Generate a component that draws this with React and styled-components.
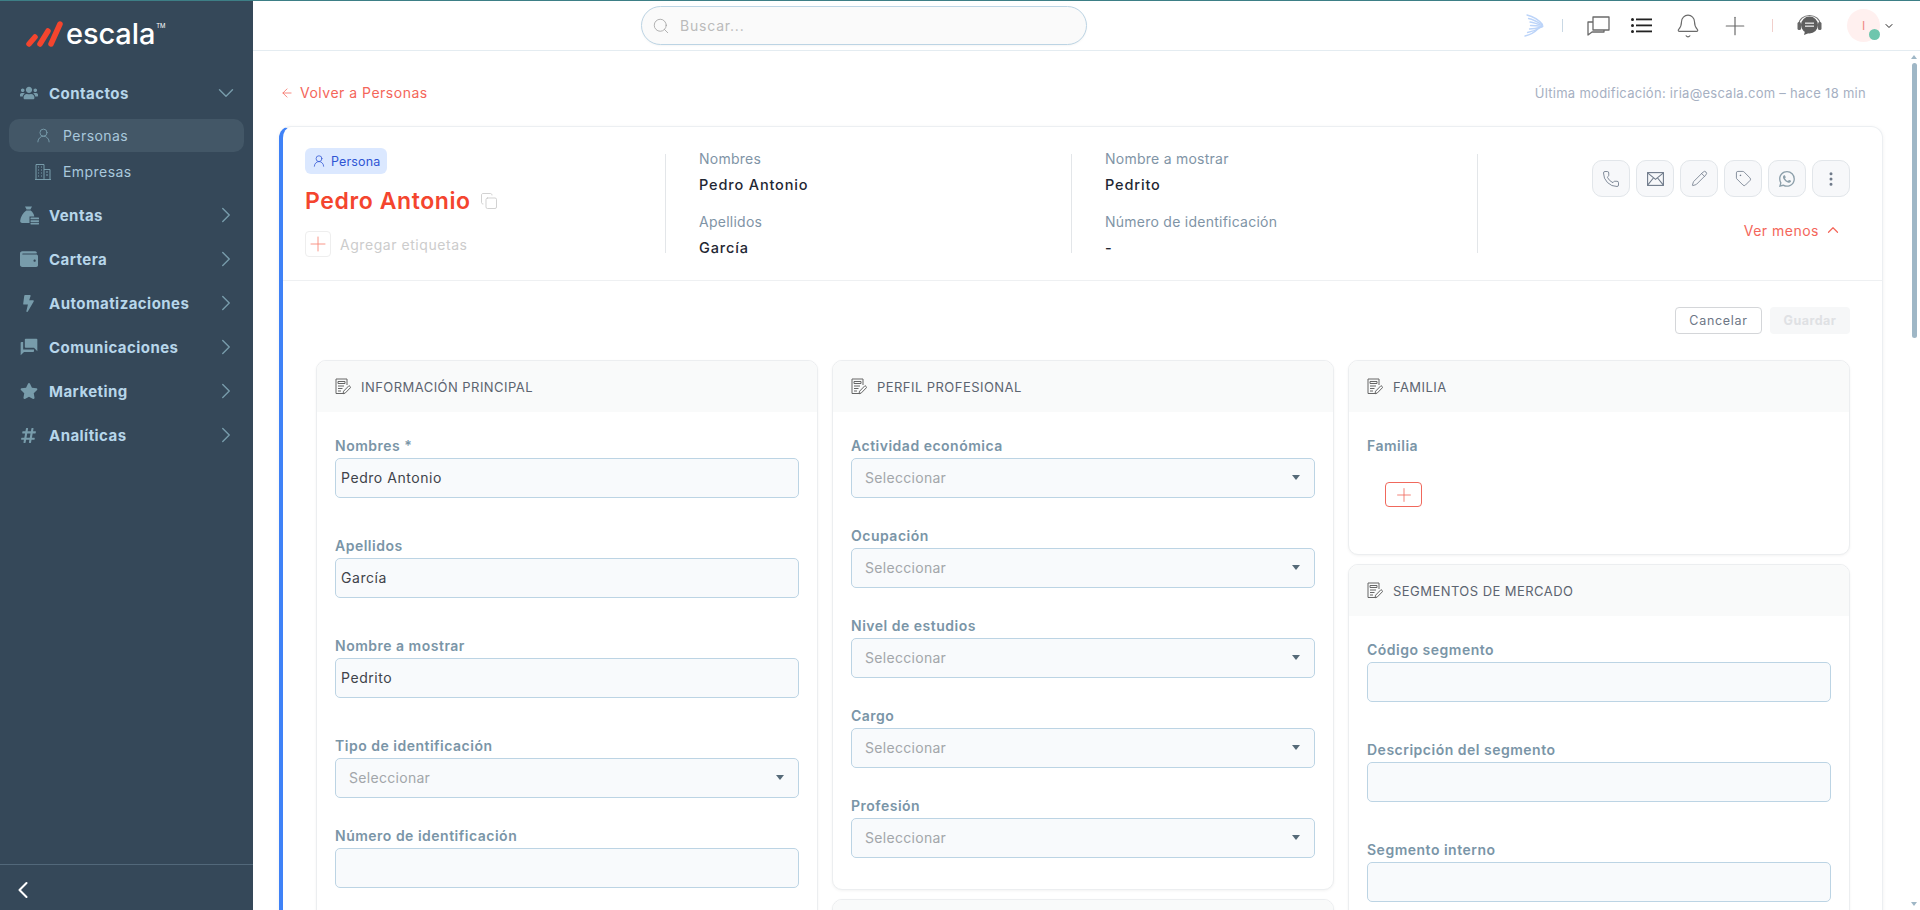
import React from 'react';
import styled, { createGlobalStyle } from 'styled-components';
import { Phone, Pencil, Tag, EllipsisVertical, ChevronDown, ChevronRight, ChevronLeft, ChevronUp, Search, Bell, Plus, ArrowLeft, UserRound, Copy } from 'lucide-react';
import { FaUsers, FaWallet, FaBolt, FaStar, FaHashtag } from 'react-icons/fa';
import { MdForum } from 'react-icons/md';
import { BsWhatsapp } from 'react-icons/bs';

const FONT = `Inter, "Noto Sans", "Liberation Sans", sans-serif`;

const Global = createGlobalStyle`
  html, body { margin: 0; padding: 0; height: 100%; overflow: hidden; background: #fff; }
  body { font-family: ${FONT}; }
  * { box-sizing: border-box; }
`;

const Shell = styled.div`display: flex; height: 910px; border-top: 1px solid #3d7f86;`;

const Sidebar = styled.aside`
  width: 253px; flex: none; background: #354859; display: flex; flex-direction: column;
`;
const LogoRow = styled.div`
  height: 64px; display: flex; align-items: flex-start; gap: 3px; padding: 15px 0 0 26px; flex: none;
`;
const LogoText = styled.span`
  color: #fff; font-size: 29px; font-weight: 500; line-height: 36px; letter-spacing: -0.1px;
  sup { font-size: 6px; vertical-align: top; line-height: 20px; margin-left: 1px; font-weight: 400; }
`;
const Nav = styled.nav`flex: 1; display: flex; flex-direction: column; padding-top: 6px;`;
const NavItem = styled.div`
  height: 44px; display: flex; align-items: center; padding: 0 14px 0 20px; flex: none;
  color: #b7d6ea; font-size: 15px; font-weight: 700; letter-spacing: 0.45px;
`;
const NavIcon = styled.span`
  width: 29px; flex: none; display: flex; align-items: center; color: #789cab;
`;
const NavLabel = styled.span`flex: 1;`;
const NavChevron = styled.span`display: flex; color: #789cab;`;
const SubItem = styled.div`
  height: ${p => p.$active ? '33px' : '37px'};
  margin: ${p => p.$active ? '4px 9px 1px' : '0 9px 3px'};
  display: flex; align-items: center; padding-left: 26px; border-radius: 10px; flex: none;
  background: ${p => p.$active ? '#435767' : 'transparent'};
  color: #a9c8dc; font-size: 14px; font-weight: 400; letter-spacing: 0.45px;
`;
const SubIcon = styled.span`width: 28px; flex: none; display: flex; color: #789cab;`;
const SideFoot = styled.div`
  height: 46px; flex: none; border-top: 1px solid #52687a; display: flex; align-items: center; padding: 5px 0 0 9px; color: #fff;
`;

const Right = styled.div`flex: 1; min-width: 0; display: flex; flex-direction: column; position: relative;`;
const Topbar = styled.header`
  height: 50px; flex: none; border-bottom: 1px solid #e4ecf1; display: flex; align-items: center; background: #fff;
`;
const SearchBox = styled.div`
  width: 446px; height: 39px; margin-left: 388px; border: 1px solid #bcd4e4; border-radius: 20px; background: #fafafa;
  display: flex; align-items: center; padding-left: 10px; gap: 10px; color: #bbb; font-size: 14px; letter-spacing: 0.8px;
  box-shadow: 0 1px 2px rgba(0,0,0,.04);
`;
const TopTools = styled.div`
  display: flex; align-items: center; margin-left: auto; height: 100%;
`;
const ToolSep = styled.span`width: 1px; height: 13px; background: ${p => p.$c}; flex: none; margin-right: ${p => p.$mr}px;`;
const ToolIcon = styled.span`display: flex; color: ${p => p.$c || '#6a6a6a'}; margin-right: ${p => p.$mr || 0}px; flex: none;`;
const Avatar = styled.div`
  width: 33px; height: 33px; border-radius: 50%; background: #fff0ef; position: relative; display: flex; align-items: center; justify-content: center;
  color: #f08585; font-size: 12px; flex: none;
`;
const AvatarDot = styled.span`
  position: absolute; width: 11px; height: 11px; border-radius: 50%; background: #6ec6ad; right: 0; bottom: 2px;
`;
const AvatarCaret = styled.span`display: flex; margin: 0 25px 0 3px; color: #222;`;

const Scroller = styled.main`
  flex: 1; min-height: 0; overflow-y: scroll; scrollbar-width: none; padding: 0 37px 30px 26px;
  &::-webkit-scrollbar { display: none; }
`;
const Rail = styled.div`
  position: absolute; top: 51px; bottom: 0; right: 0; width: 9px; background: #fff; display: flex; flex-direction: column; align-items: center; padding: 3px 0 4px 0;
`;
const RailArrow = styled.span`
  width: 0; height: 0; flex: none; margin-right: 3px; border-left: 3px solid transparent; border-right: 3px solid transparent;
  ${p => p.$down ? 'border-top: 4px solid #9fb7c6; margin-top: auto;' : 'border-bottom: 4px solid #9fb7c6;'}
`;
const RailThumb = styled.span`
  width: 5px; height: 275px; flex: none; margin: 4px 3px 0 0; border-radius: 3px; background: #9fb7c6;
`;
const TopLine = styled.div`
  height: 75px; display: flex; align-items: center; justify-content: space-between; padding: 8px 17px 0 1px;
`;
const BackLink = styled.a`
  display: flex; align-items: center; gap: 6px; color: #f4665a; font-size: 14px; letter-spacing: 0.5px;
`;
const Modified = styled.span`color: #a6b0c2; font-size: 13px; letter-spacing: 0.28px;`;

const MainCard = styled.section`
  background: #fff; border: 1px solid #eceff2; border-left: 4px solid #3f82f7; border-radius: 12px;
  box-shadow: 0 1px 4px rgba(0,0,0,.06); min-height: 2600px;
`;
const Summary = styled.div`
  height: 154px; border-bottom: 1px solid #eef0f2; display: grid; grid-template-columns: 361px 406px 406px 1fr; padding: 27px 32px 0 22px;
`;
const SumCol = styled.div`
  height: 99px; border-right: ${p => p.$last ? 'none' : '1px solid #e3e6e9'}; padding-left: ${p => p.$first ? 0 : 33}px;
  display: flex; flex-direction: column;
  & > * { flex: none; }
`;
const Badge = styled.span`
  align-self: flex-start; height: 26px; width: 82px; margin-top: -6px; background: #dbe8ff; border-radius: 6px; color: #2f55d4; font-size: 12.5px;
  display: flex; align-items: center; gap: 5px; padding-left: 7px; letter-spacing: 0.15px;
`;
const NameRow = styled.div`display: flex; align-items: center; gap: 9px; margin-top: 13px; height: 28px; color: #c8c8c8;`;
const Name = styled.h1`
  margin: 0; font-size: 23px; font-weight: 600; color: #f4452e; letter-spacing: 0.6px; line-height: 28px;
`;
const TagRow = styled.div`display: flex; align-items: center; gap: 9px; margin-top: 16px; color: #cccccc; font-size: 14px; letter-spacing: 0.55px;`;
const TagAdd = styled.span`
  width: 26px; height: 26px; border: 1px solid #eee; border-radius: 4px; display: flex; align-items: center; justify-content: center; color: #f88a7c;
`;
const SumLabel = styled.span`
  color: #7f94a6; font-size: 14px; letter-spacing: 0.25px; line-height: 20px; margin-top: ${p => p.$mt}px;
`;
const SumValue = styled.span`
  color: #1f2733; font-size: 14.5px; font-weight: 500; letter-spacing: 0.85px; line-height: 20px; margin-top: 6px;
`;
const Actions = styled.div`display: flex; flex-direction: column; align-items: flex-end;`;
const IconBtns = styled.div`display: flex; gap: 6px; margin-top: 6px;`;
const IconBtn = styled.button`
  width: 38px; height: 37px; border: 1px solid #e2e6ea; border-radius: 10px; background: #f7f8fa; color: #6f7a8a;
  display: flex; align-items: center; justify-content: center; padding: 0;
`;
const Less = styled.span`
  display: flex; align-items: center; gap: 5px; color: #f4665a; font-size: 14px; letter-spacing: 0.5px; margin-top: 24px; margin-right: 8px;
`;
const FormArea = styled.div`padding: 26px 32px 0 33px;`;
const FormActions = styled.div`display: flex; justify-content: flex-end; gap: 8px; margin-bottom: 26px;`;
const CancelBtn = styled.button`
  width: 87px; height: 27px; border: 1px solid #d4d6d9; border-radius: 4px; background: #fff; color: #6d7685; font: 400 12.5px ${FONT}; letter-spacing: 0.7px;
`;
const SaveBtn = styled.button`
  width: 80px; height: 27px; border: none; border-radius: 4px; background: #f6f7f8; color: #dfe1e4; font: 700 12.5px ${FONT}; letter-spacing: 0.5px;
`;
const Columns = styled.div`display: grid; grid-template-columns: repeat(3, 502px); column-gap: 14px; align-items: start;`;
const Stack = styled.div`display: flex; flex-direction: column; gap: 9px;`;
const Panel = styled.div`
  background: #fff; border: 1px solid #eceef0; border-radius: 10px; box-shadow: 0 1px 3px rgba(0,0,0,.05); overflow: hidden;
  height: ${p => p.$h ? p.$h + 'px' : 'auto'};
`;
const PanelHead = styled.div`
  height: 51px; background: #f9fafa; display: flex; align-items: center; gap: 10px; padding-left: 18px; color: #5c6470; font-size: 13px; font-weight: 400; letter-spacing: 0.45px;
`;
const PanelBody = styled.div`padding: 22px 18px 0;`;
const Field = styled.div`margin-bottom: ${p => p.$select ? 26 : 36}px;`;
const Label = styled.label`
  display: block; color: #7a95a7; font-size: 14px; font-weight: 600; line-height: 23px; height: 23px; letter-spacing: 0.5px;
`;
const InputBox = styled.div`
  height: 40px; border: 1px solid #bcd4e4; border-radius: 5px; background: #f8fafc; display: flex; align-items: center; margin-top: 1px;
  padding: 0 ${p => p.$select ? 14 : 6}px 1px ${p => p.$select ? 13 : 5}px; color: ${p => p.$select ? '#a2a6aa' : '#3f434a'}; font-size: 14px;
  letter-spacing: ${p => p.$select ? 0.3 : 0.55}px;
  justify-content: space-between;
`;
const Caret = styled.span`
  width: 0; height: 0; border-left: 4px solid transparent; border-right: 4px solid transparent; border-top: 5px solid #566a78;
`;
const AddBtn = styled.button`
  width: 37px; height: 25px; border: 1px solid #f0685c; border-radius: 4px; background: #fff; color: #f0685c; margin: 25px 0 0 18px; padding: 0;
  display: flex; align-items: center; justify-content: center;
`;

const LogoMark = () => (
  <svg width="37" height="26" viewBox="0 0 37 26" style={{ marginTop: 5, flex: 'none' }}>
    <g stroke="#f4452e" strokeWidth="5.5" strokeLinecap="round" fill="none">
      <path d="M3 23 L9 16" />
      <path d="M14 23 L22 10" />
      <path d="M25 23 L34 3" />
    </g>
  </svg>
);
const BagIcon = () => (
  <svg width="19" height="19" viewBox="0 0 19 19" fill="currentColor">
    <path d="M5 0.5h7l-1.600 3H6.600z" />
    <path d="M6.300 4.500h4.400c2 1.700 3.300 3.800 3.600 6H9.500v6.500H2.200C.6 17 0 16 .2 14.600.6 10.600 3 7 6.300 4.500z" />
    <rect x="10.500" y="11.600" width="8.500" height="1.700" rx=".4" />
    <rect x="10.500" y="14.200" width="8.500" height="1.700" rx=".4" />
    <rect x="10.500" y="16.800" width="8.500" height="1.700" rx=".4" />
  </svg>
);
const PersonThin = ({ size = 17 }) => <UserRound size={size} strokeWidth={1.3} />;
const BuildingIcon = () => (
  <svg width="16" height="17" viewBox="0 0 16 17" fill="none" stroke="currentColor" strokeWidth="1">
    <path d="M1 16.500V1.500h8v15M9 6.500h6v10M0 16.500h16" />
    <path d="M3 4h1M6 4h1M3 7h1M6 7h1M3 10h1M6 10h1M3 13h1M6 13h1M11 9h2M11 12h2" strokeWidth="1.200" />
  </svg>
);
const NoteIcon = () => (
  <svg width="16" height="17" viewBox="0 0 16 17" fill="none" stroke="#666" strokeWidth="1" style={{ flex: 'none' }}>
    <path d="M9.500 15.500H1V1h11v6" />
    <path d="M3 3.500h7v2H3zM3 8h6M3 10.500h4.500M3 13h3" />
    <path d="M8 15.800l.6-2.600 5.400-5.600 1.800 1.700-5.400 5.600z" />
  </svg>
);
const MailIcon = () => (
  <svg width="17" height="14" viewBox="0 0 17 14" fill="none" stroke="currentColor" strokeWidth="1.100">
    <rect x=".6" y=".6" width="15.800" height="12.800" />
    <path d="M.6.8l7.900 6.600L16.400.8M.6 13.200l5.800-7.200M16.400 13.200l-5.800-7.200" />
  </svg>
);
const WingIcon = () => (
  <svg width="20" height="24" viewBox="0 0 20 24" fill="none" stroke="#bcd4f9" strokeWidth="1.300" strokeLinecap="round" style={{ flex: 'none' }}>
    <path d="M3 1c5 1.200 11 4 15.500 9.500" />
    <path d="M4.500 4.500c4 .8 8 2.600 14 6.500" />
    <path d="M6 8c4 .6 8 2 13 4" />
    <path d="M6.500 11.500c4 0 8 .4 12 1" />
    <path d="M5.500 15c4-.2 8-1 12.500-2" />
    <path d="M3.500 18.500c4-.7 9-2.500 13-5" />
    <path d="M1 22c5-1 10-4 14-8" />
  </svg>
);
const ChatsIcon = () => (
  <svg width="23" height="20" viewBox="0 0 23 20" fill="none" stroke="#6a6a6a" strokeWidth="1.300" strokeLinejoin="round">
    <path d="M6 6H1v13l4-3h12v-2" />
    <path d="M6 1h16v13H6z" />
  </svg>
);
const ListIcon = () => (
  <svg width="21" height="15" viewBox="0 0 21 15" fill="#222">
    <circle cx="1.500" cy="1.500" r="1.500" /><circle cx="1.500" cy="7.500" r="1.500" /><circle cx="1.500" cy="13.500" r="1.500" />
    <rect x="5" y="0.500" width="16" height="1.800" /><rect x="5" y="6.500" width="16" height="1.800" /><rect x="5" y="12.500" width="16" height="1.800" />
  </svg>
);
const HeadsetIcon = () => (
  <svg width="25" height="23" viewBox="0 0 25 23">
    <path d="M2 13V10C2 5 7 1.500 12.500 1.500S23 5 23 10v3" fill="none" stroke="#777" strokeWidth="1.200" />
    <rect x="0.500" y="8" width="3.500" height="8" rx="1.500" fill="#666" />
    <rect x="21" y="8" width="3.500" height="8" rx="1.500" fill="#666" />
    <circle cx="12.500" cy="11" r="8.500" fill="#5e5e5e" />
    <path d="M8 17l-1 4 5-2z" fill="#5e5e5e" />
    <rect x="8" y="8.500" width="9" height="1.400" fill="#ddd" /><rect x="8" y="11.500" width="9" height="1.400" fill="#ddd" />
  </svg>
);

const menu = [
  ['Ventas', <BagIcon />],
  ['Cartera', <FaWallet size={18} />],
  ['Automatizaciones', <FaBolt size={17} />],
  ['Comunicaciones', <MdForum size={20} style={{ transform: 'scaleX(-1)', marginLeft: -1 }} />],
  ['Marketing', <FaStar size={18} />],
  ['Analíticas', <FaHashtag size={17} />],
];

const InputField = ({ label, value }) => (
  <Field><Label>{label}</Label><InputBox>{value}</InputBox></Field>
);
const SelectField = ({ label }) => (
  <Field $select><Label>{label}</Label><InputBox $select>Seleccionar<Caret /></InputBox></Field>
);
const Head = ({ children }) => <PanelHead><NoteIcon />{children}</PanelHead>;

export default function App() {
  return (
    <>
      <Global />
      <Shell>
        <Sidebar>
          <LogoRow><LogoMark /><LogoText>escala<sup>TM</sup></LogoText></LogoRow>
          <Nav>
            <NavItem>
              <NavIcon><FaUsers size={18} /></NavIcon><NavLabel>Contactos</NavLabel>
              <NavChevron><ChevronDown size={26} strokeWidth={1.3} /></NavChevron>
            </NavItem>
            <SubItem $active><SubIcon><PersonThin /></SubIcon>Personas</SubItem>
            <SubItem><SubIcon><BuildingIcon /></SubIcon>Empresas</SubItem>
            {menu.map(([l, i]) => (
              <NavItem key={l}>
                <NavIcon>{i}</NavIcon><NavLabel>{l}</NavLabel>
                <NavChevron><ChevronRight size={26} strokeWidth={1.3} /></NavChevron>
              </NavItem>
            ))}
          </Nav>
          <SideFoot><ChevronLeft size={28} strokeWidth={1.8} /></SideFoot>
        </Sidebar>
        <Right>
          <Topbar>
            <SearchBox><Search size={18} strokeWidth={1} color="#999" />Buscar...</SearchBox>
            <TopTools>
              <ToolIcon $mr={18}><WingIcon /></ToolIcon>
              <ToolSep $c="#c9d8e4" $mr={24} />
              <ToolIcon $mr={21}><ChatsIcon /></ToolIcon>
              <ToolIcon $mr={23}><ListIcon /></ToolIcon>
              <ToolIcon $mr={19}><Bell size={26} strokeWidth={1.05} /></ToolIcon>
              <ToolIcon $mr={22}><Plus size={30} strokeWidth={0.95} /></ToolIcon>
              <ToolSep $c="#f1cfcb" $mr={24} />
              <ToolIcon $mr={25}><HeadsetIcon /></ToolIcon>
              <Avatar>I<AvatarDot /></Avatar>
              <AvatarCaret><ChevronDown size={12} strokeWidth={2} /></AvatarCaret>
            </TopTools>
          </Topbar>
          <Scroller>
            <TopLine>
              <BackLink><ArrowLeft size={14} strokeWidth={1.3} />Volver a Personas</BackLink>
              <Modified>Última modificación: iria@escala.com – hace 18 min</Modified>
            </TopLine>
            <MainCard>
              <Summary>
                <SumCol $first>
                  <Badge><PersonThin size={14} />Persona</Badge>
                  <NameRow><Name>Pedro Antonio</Name><Copy size={18} strokeWidth={1.1} /></NameRow>
                  <TagRow><TagAdd><Plus size={24} strokeWidth={0.9} /></TagAdd>Agregar etiquetas</TagRow>
                </SumCol>
                <SumCol>
                  <SumLabel $mt={-5}>Nombres</SumLabel><SumValue>Pedro Antonio</SumValue>
                  <SumLabel $mt={17}>Apellidos</SumLabel><SumValue>García</SumValue>
                </SumCol>
                <SumCol>
                  <SumLabel $mt={-5}>Nombre a mostrar</SumLabel><SumValue>Pedrito</SumValue>
                  <SumLabel $mt={17}>Número de identificación</SumLabel><SumValue>-</SumValue>
                </SumCol>
                <SumCol $last>
                  <Actions>
                    <IconBtns>
                      <IconBtn><Phone size={18} strokeWidth={1.15} /></IconBtn>
                      <IconBtn><MailIcon /></IconBtn>
                      <IconBtn><Pencil size={17} strokeWidth={1.15} /></IconBtn>
                      <IconBtn><Tag size={17} strokeWidth={1.15} /></IconBtn>
                      <IconBtn><BsWhatsapp size={16} color="#8da0ab" /></IconBtn>
                      <IconBtn><EllipsisVertical size={18} strokeWidth={2} /></IconBtn>
                    </IconBtns>
                    <Less>Ver menos<ChevronUp size={18} strokeWidth={1.6} /></Less>
                  </Actions>
                </SumCol>
              </Summary>
              <FormArea>
                <FormActions>
                  <CancelBtn>Cancelar</CancelBtn>
                  <SaveBtn>Guardar</SaveBtn>
                </FormActions>
                <Columns>
                  <Panel>
                    <Head>INFORMACIÓN PRINCIPAL</Head>
                    <PanelBody>
                      <InputField label="Nombres *" value="Pedro Antonio" />
                      <InputField label="Apellidos" value="García" />
                      <InputField label="Nombre a mostrar" value="Pedrito" />
                      <SelectField label="Tipo de identificación" />
                      <InputField label="Número de identificación" value="" />
                    </PanelBody>
                  </Panel>
                  <Stack>
                    <Panel $h={530}>
                      <Head>PERFIL PROFESIONAL</Head>
                      <PanelBody>
                        <SelectField label="Actividad económica" />
                        <SelectField label="Ocupación" />
                        <SelectField label="Nivel de estudios" />
                        <SelectField label="Cargo" />
                        <SelectField label="Profesión" />
                      </PanelBody>
                    </Panel>
                    <Panel $h={200}><PanelHead /></Panel>
                  </Stack>
                  <Stack>
                    <Panel $h={195}>
                      <Head>FAMILIA</Head>
                      <PanelBody>
                        <Label>Familia</Label>
                        <AddBtn><Plus size={22} strokeWidth={0.9} /></AddBtn>
                      </PanelBody>
                    </Panel>
                    <Panel>
                      <Head>SEGMENTOS DE MERCADO</Head>
                      <PanelBody>
                        <InputField label="Código segmento" value="" />
                        <InputField label="Descripción del segmento" value="" />
                        <InputField label="Segmento interno" value="" />
                      </PanelBody>
                    </Panel>
                  </Stack>
                </Columns>
              </FormArea>
            </MainCard>
          </Scroller>
          <Rail aria-hidden="true">
            <RailArrow />
            <RailThumb />
            <RailArrow $down />
          </Rail>
        </Right>
      </Shell>
    </>
  );
}
